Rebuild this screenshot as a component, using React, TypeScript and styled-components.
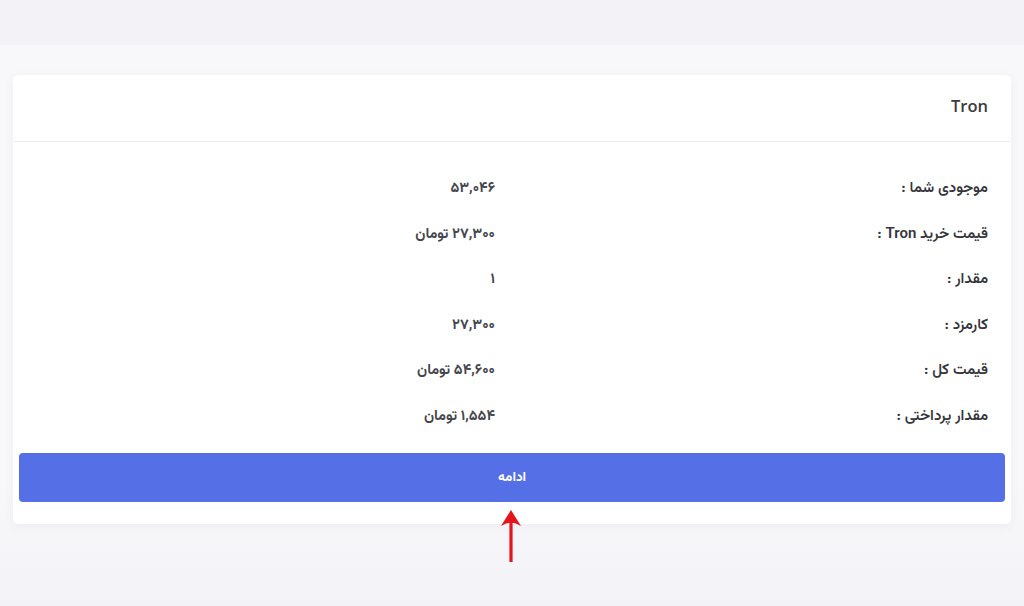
import React from "react";
import styled, { createGlobalStyle } from "styled-components";

const GlobalStyle = createGlobalStyle`
  html, body {
    margin: 0;
    padding: 0;
    background: #f5f5f9;
  }
  body {
    font-family: "Vazirmatn", "DejaVu Sans", "Noto Sans", sans-serif;
  }
`;

type Row = { label: string; value: string };

const rows: Row[] = [
  { label: "موجودی شما :", value: "۵۳,۰۴۶" },
  { label: "قیمت خرید Tron :", value: "۲۷,۳۰۰ تومان" },
  { label: "مقدار :", value: "۱" },
  { label: "کارمزد :", value: "۲۷,۳۰۰" },
  { label: "قیمت کل :", value: "۵۴,۶۰۰ تومان" },
  { label: "مقدار پرداختی :", value: "۱,۵۵۴ تومان" },
];

export default function App() {
  return (
    <>
      <GlobalStyle />
      <Page>
        <TopBand />
        <Content>
          <Card dir="rtl">
            <CardHeader>Tron</CardHeader>
            <CardBody>
              {rows.map((r) => (
                <InfoRow key={r.label}>
                  <Label>{r.label}</Label>
                  <Value>{r.value}</Value>
                </InfoRow>
              ))}
            </CardBody>
            <ButtonWrap>
              <ContinueButton>ادامه</ContinueButton>
              <Arrow width="24" height="56" viewBox="0 0 24 56">
                <path d="M12 2 L22 18 Q16 14.5 13.6 15 L13.6 54 L10.4 54 L10.4 15 Q8 14.5 2 18 Z" fill="#e5151d" />
              </Arrow>
            </ButtonWrap>
          </Card>
        </Content>
      </Page>
    </>
  );
}

const Page = styled.div`
  width: 1024px;
  height: 606px;
  display: flex;
  flex-direction: column;
  background: linear-gradient(#f8f8fb 0%, #f8f8fb 80%, #f3f3f7 100%);
  overflow: hidden;
`;

const TopBand = styled.div`
  height: 45px;
  background: #f3f3f7;
`;

const Content = styled.div`
  padding: 30px 13px 0 13px;
`;

const Card = styled.div`
  background: #ffffff;
  border-radius: 5px;
  box-shadow: 0 2px 10px rgba(60, 60, 110, 0.06);
  display: flex;
  flex-direction: column;
`;

const CardHeader = styled.div`
  height: 67px;
  display: flex;
  align-items: center;
  padding: 0 23px 6px 23px;
  box-sizing: border-box;
  border-bottom: 1px solid #ececf1;
  font-family: "Open Sans", "DejaVu Sans", sans-serif;
  font-size: 16.5px;
  font-weight: 600;
  color: #3a3a40;
`;

const CardBody = styled.div`
  padding: 24px 23px 0 23px;
  display: flex;
  flex-direction: column;
`;

const InfoRow = styled.div`
  display: grid;
  grid-template-columns: 1fr 1fr;
  column-gap: 34px;
  height: 45.5px;
  align-items: center;
`;

const Label = styled.div`
  font-size: 15px;
  font-weight: 600;
  color: #35353b;
`;

const Value = styled.div`
  font-size: 14.5px;
  font-weight: 700;
  color: #45454c;
`;

const ButtonWrap = styled.div`
  position: relative;
  padding: 14px 6px 22px 6px;
`;

const ContinueButton = styled.button`
  width: 100%;
  height: 49px;
  border: none;
  border-radius: 4px;
  background: #5570e6;
  color: #ffffff;
  font-family: "Vazirmatn", "DejaVu Sans", sans-serif;
  font-size: 13.5px;
  font-weight: 700;
  cursor: pointer;
`;

const Arrow = styled.svg`
  position: absolute;
  left: 486px;
  top: 69px;
`;
